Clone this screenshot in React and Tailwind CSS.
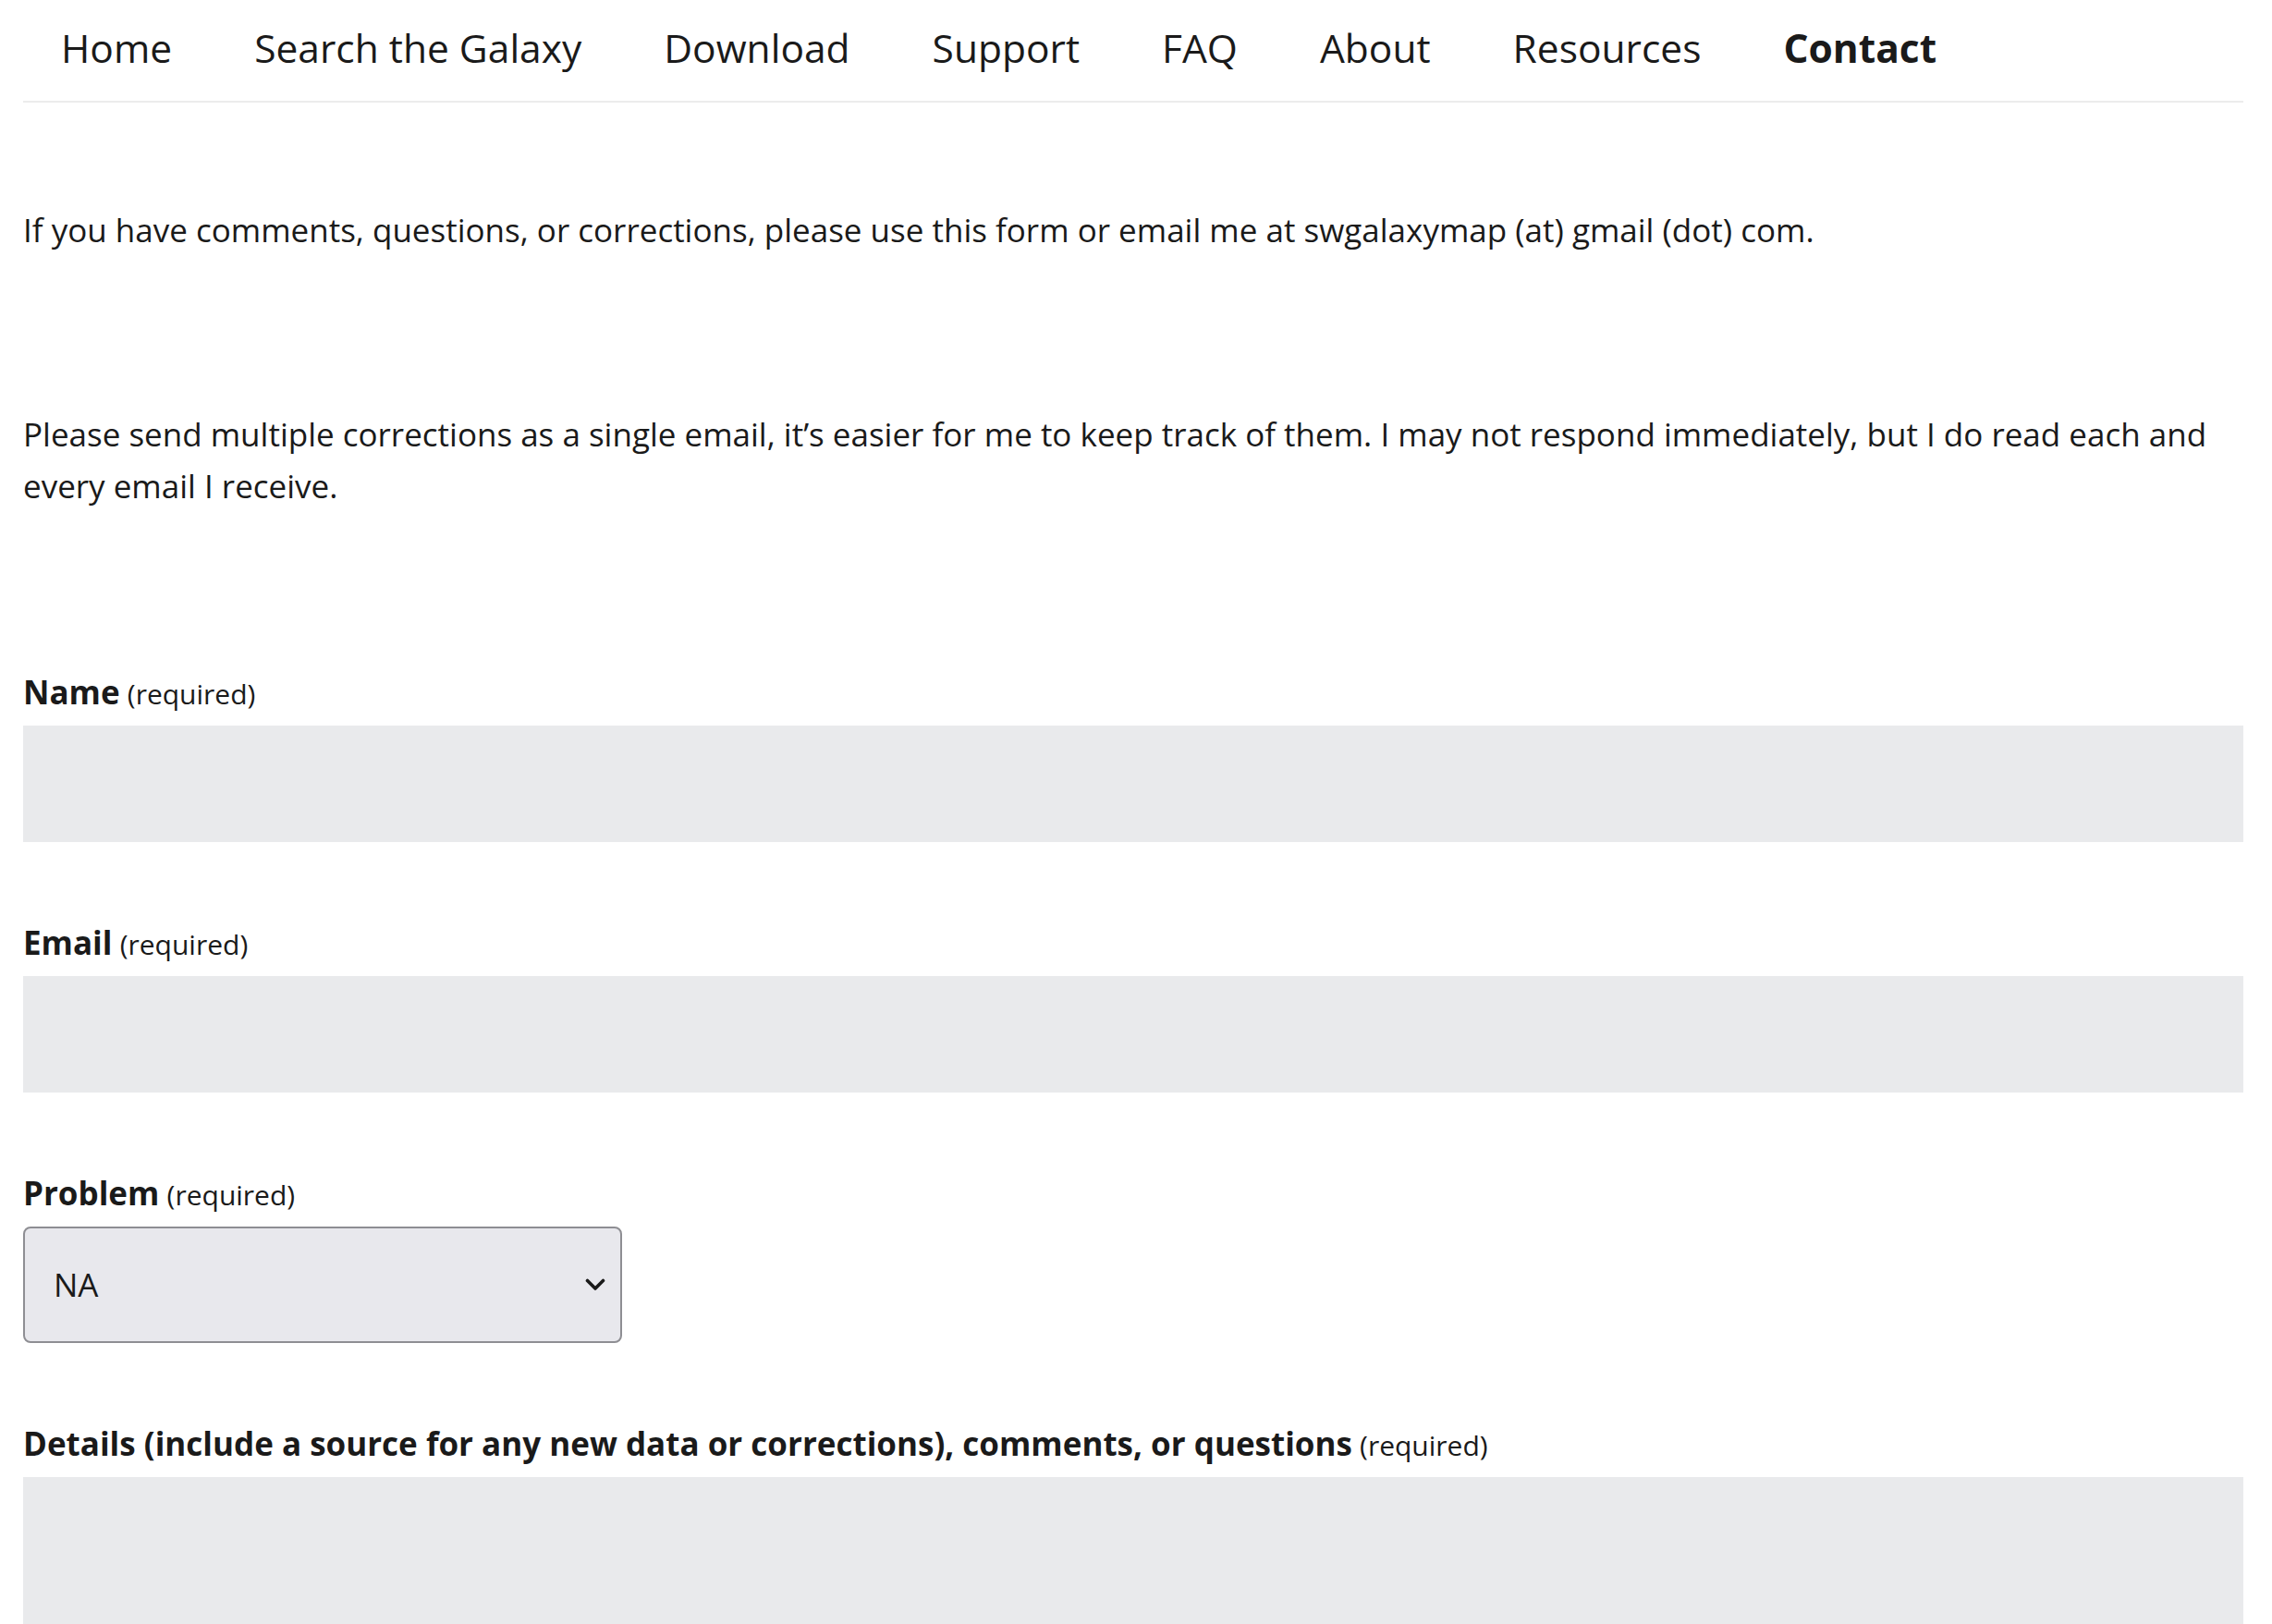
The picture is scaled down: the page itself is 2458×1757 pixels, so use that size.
import React from "react";

const navItems = ["Home", "Search the Galaxy", "Download", "Support", "FAQ", "About", "Resources", "Contact"];

function Label({ title }) {
  return (
    <label className="block leading-[56px] text-[#1a1a1a]">
      <span className="text-[35px] font-bold">{title}</span>{" "}
      <span className="ml-[4px] text-[30px]">(required)</span>
    </label>
  );
}

export default function App() {
  return (
    <div className="min-h-screen bg-white text-[#1a1a1a]" style={{ fontFamily: '"Open Sans", "Noto Sans", sans-serif' }}>
      <div className="w-[2402px] ml-[25px] pb-[40px]">
        <nav className="h-[111px] border-b-2 border-[#ececec]">
          <ul className="flex gap-[89px] ml-[41px] pt-[20px] text-[42.5px] leading-normal">
            {navItems.map((item) => (
              <li key={item} className={item === "Contact" ? "font-bold" : ""}>
                {item}
              </li>
            ))}
          </ul>
        </nav>

        <p className="mt-[110px] text-[35px] leading-[56px]">
          If you have comments, questions, or corrections, please use this form or email me at swgalaxymap (at) gmail (dot) com.
        </p>

        <p className="mt-[165px] text-[35px] leading-[56px]">
          Please send multiple corrections as a single email, it’s easier for me to keep track of them. I may not respond immediately, but I do read each and every email I receive.
        </p>

        <form className="mt-[167px] flex flex-col">
          <Label title="Name" />
          <div className="mt-[1px] h-[126px] bg-[#e9eaec]" />

          <div className="mt-[81px]">
            <Label title="Email" />
          </div>
          <div className="mt-[1px] h-[126px] bg-[#e9eaec]" />

          <div className="mt-[81px]">
            <Label title="Problem" />
          </div>
          <div className="relative mt-[1px] w-[648px] h-[126px] rounded-[8px] border-2 border-[#8e8e93] bg-[#e8e8ed] flex items-center pl-[31px]">
            <span className="text-[35px]">NA</span>
            <svg
              className="absolute right-[16px] top-1/2 -translate-y-1/2"
              width="22"
              height="14"
              viewBox="0 0 22 14"
              fill="none"
              stroke="#1a1a1a"
              strokeWidth="3.6"
              strokeLinecap="round"
              strokeLinejoin="round"
            >
              <path d="M2.5 2.5 L11 11 L19.5 2.5" />
            </svg>
          </div>

          <div className="mt-[81px]">
            <Label title="Details (include a source for any new data or corrections), comments, or questions" />
          </div>
          <div className="mt-[1px] h-[300px] bg-[#e9eaec]" />
        </form>
      </div>
    </div>
  );
}
